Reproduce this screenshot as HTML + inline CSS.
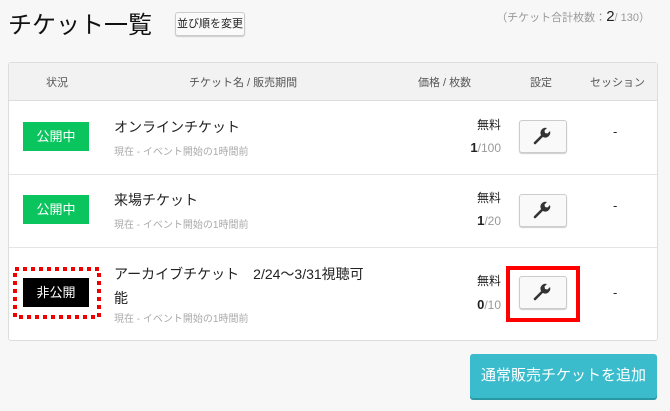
<!DOCTYPE html>
<html><head><meta charset="utf-8"><style>
body{margin:0;width:670px;height:411px;background:#f7f7f7;font-family:"Liberation Sans","Noto Sans CJK JP",sans-serif;position:relative;overflow:hidden;color:#222}
.a{position:absolute}
h1{position:absolute;left:8px;top:5px;margin:0;font-size:24px;font-weight:normal;color:#111}
.sb{left:175px;top:12px;width:68px;height:22px;border:1px solid #ccc;border-radius:3px;background:#fafafa;font-size:11px;text-align:center;line-height:22px;box-shadow:0 1px 1px #ccc}
.cnt{right:20px;top:8px;font-size:11px;color:#999}
.cnt b{font-size:15px;color:#222;font-weight:normal}
.tbl{left:8px;top:62px;width:648px;height:277px;border:1px solid #ddd;border-radius:3px;background:#fff}
.hd{left:0;top:0;width:648px;height:37px;background:#f2f2f2;border-bottom:1px solid #ddd;font-size:11px;color:#555}
.row{left:0;width:648px;border-bottom:1px solid #e5e5e5}
.badge{color:#fff;font-size:13px;text-align:center;line-height:29px;width:66px;height:29px}
.g{background:#0ac55e}
.nm{font-size:14px;color:#222}
.sub{font-size:10px;color:#aaa}
.pr{font-size:12px;text-align:right;width:60px}
.wr{width:46px;height:31px;border:1px solid #ccc;border-radius:3px;background:#f9f9f9;box-shadow:0 1px 1px #ccc}
</style></head><body>
<h1>チケット一覧</h1>
<div class="a sb">並び順を変更</div>
<div class="a cnt">（チケット合計枚数：<b>2</b>/ 130）</div>
<div class="a tbl">
 <div class="a hd">
  <span class="a" style="left:37px;top:11px">状況</span>
  <span class="a" style="left:180px;top:11px">チケット名 / 販売期間</span>
  <span class="a" style="left:409px;top:11px">価格 / 枚数</span>
  <span class="a" style="left:521px;top:11px">設定</span>
  <span class="a" style="left:581px;top:11px">セッション</span>
 </div>
 <div class="a row" style="top:38px;height:73px"></div>
 <div class="a row" style="top:111px;height:73px"></div>
</div>
<!-- row1 -->
<div class="a badge g" style="left:23px;top:122px">公開中</div>
<div class="a nm" style="left:114px;top:117px">オンラインチケット</div>
<div class="a sub" style="left:114px;top:143px">現在 - イベント開始の1時間前</div>
<div class="a pr" style="left:441px;top:116px">無料</div>
<div class="a pr" style="left:441px;top:140px;color:#999"><b style="color:#222;font-size:13px">1</b>/100</div>
<div class="a wr" style="left:519px;top:120px"></div>
<div class="a" style="left:613px;top:124px;font-size:13px">-</div>
<!-- row2 -->
<div class="a badge g" style="left:23px;top:195px">公開中</div>
<div class="a nm" style="left:114px;top:190px">来場チケット</div>
<div class="a sub" style="left:114px;top:216px">現在 - イベント開始の1時間前</div>
<div class="a pr" style="left:441px;top:189px">無料</div>
<div class="a pr" style="left:441px;top:213px;color:#999"><b style="color:#222;font-size:13px">1</b>/20</div>
<div class="a wr" style="left:519px;top:194px"></div>
<div class="a" style="left:613px;top:198px;font-size:13px">-</div>
<!-- row3 -->
<svg class="a" style="left:13px;top:267px" width="88" height="52"><rect x="2" y="2" width="84" height="48" fill="none" stroke="#e00" stroke-width="4" stroke-dasharray="4 4"/></svg>
<div class="a badge" style="left:23px;top:278px;background:#000">非公開</div>
<div class="a nm" style="left:114px;top:262px;line-height:24px">アーカイブチケット　2/24～3/31視聴可<br>能</div>
<div class="a sub" style="left:114px;top:310px">現在 - イベント開始の1時間前</div>
<div class="a pr" style="left:441px;top:272px">無料</div>
<div class="a pr" style="left:441px;top:297px;color:#999"><b style="color:#222;font-size:13px">0</b>/10</div>
<div class="a" style="left:506px;top:266px;width:66px;height:48px;border:4px solid #f00"></div>
<div class="a wr" style="left:519px;top:276px"></div>
<div class="a" style="left:613px;top:285px;font-size:13px">-</div>
<!-- wrenches -->
<svg class="a" style="left:532px;top:126px" width="20" height="20" viewBox="0 0 20 20"><path d="M3 17 L10 10" stroke="#333" stroke-width="2.6" stroke-linecap="round"/><path d="M9 9 A5 5 0 0 1 15 2 L12.5 4.5 L13 7 L15.5 7.5 L18 5 A5 5 0 0 1 11 11 Z" fill="#333"/></svg>
<svg class="a" style="left:532px;top:200px" width="20" height="20" viewBox="0 0 20 20"><path d="M3 17 L10 10" stroke="#333" stroke-width="2.6" stroke-linecap="round"/><path d="M9 9 A5 5 0 0 1 15 2 L12.5 4.5 L13 7 L15.5 7.5 L18 5 A5 5 0 0 1 11 11 Z" fill="#333"/></svg>
<svg class="a" style="left:532px;top:282px" width="20" height="20" viewBox="0 0 20 20"><path d="M3 17 L10 10" stroke="#333" stroke-width="2.6" stroke-linecap="round"/><path d="M9 9 A5 5 0 0 1 15 2 L12.5 4.5 L13 7 L15.5 7.5 L18 5 A5 5 0 0 1 11 11 Z" fill="#333"/></svg>
<div class="a" style="left:470px;top:354px;width:187px;height:44px;background:#3bbccc;border-radius:3px;box-shadow:0 2px 0 #2a97a5;color:#fff;font-size:15px;text-align:center;line-height:44px">通常販売チケットを追加</div>
</body></html>
